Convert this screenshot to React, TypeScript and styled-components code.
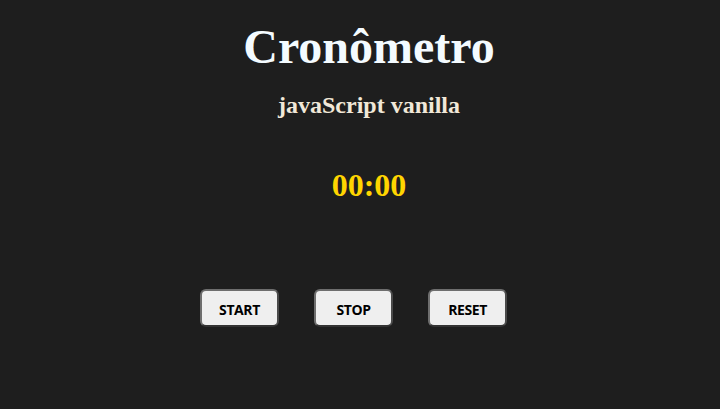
import React from "react";
import styled, { createGlobalStyle } from "styled-components";

const Global = createGlobalStyle`
  html, body { margin: 0; padding: 0; background: #1e1e1e; }
  body { width: 720px; height: 409px; overflow: hidden; }
`;

const Page = styled.main`
  display: flex;
  flex-direction: column;
  align-items: center;
  padding-top: 19px;
`;

const TextBlock = styled.div`
  display: flex;
  flex-direction: column;
  align-items: center;
  padding-left: 18px;
`;

const Title = styled.h1`
  margin: 0;
  font-family: "Liberation Serif", "Times New Roman", serif;
  font-weight: 700;
  font-size: 48px;
  color: #f4fbff;
`;

const Subtitle = styled.h2`
  margin: 18px 0 0;
  font-family: "Liberation Serif", "Times New Roman", serif;
  font-weight: 700;
  font-size: 24px;
  color: #f1e8d8;
`;

const Timer = styled.div`
  margin-top: 48px;
  font-family: "Liberation Serif", "Times New Roman", serif;
  font-weight: 700;
  font-size: 32px;
  color: #ffd500;
`;

const Controls = styled.div`
  display: flex;
  gap: 35px;
  margin-top: 85px;
  padding-right: 13px;
`;

const Button = styled.button`
  width: 79px;
  height: 38px;
  padding: 3px 0 0;
  background: #efefef;
  border-style: solid;
  border-width: 2px;
  border-color: #6e6e6e #4a4a4a #333333 #6e6e6e;
  border-radius: 6px;
  font-family: "Open Sans", "Noto Sans", sans-serif;
  font-weight: 700;
  font-size: 14px;
  letter-spacing: -0.4px;
  color: #000;
  cursor: pointer;
`;

export default function App() {
  return (
    <>
      <Global />
      <Page>
        <TextBlock>
          <Title>Cronômetro</Title>
          <Subtitle>javaScript vanilla</Subtitle>
          <Timer>00:00</Timer>
        </TextBlock>
        <Controls>
          <Button>START</Button>
          <Button>STOP</Button>
          <Button>RESET</Button>
        </Controls>
      </Page>
    </>
  );
}
